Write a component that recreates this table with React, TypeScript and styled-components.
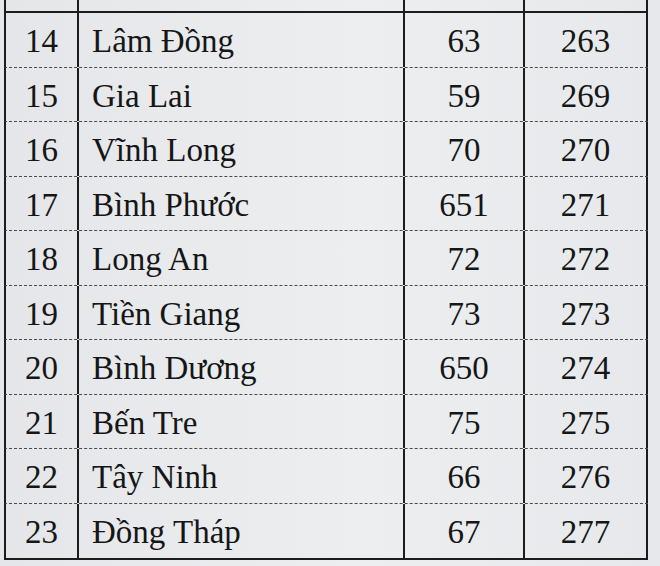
import React from 'react';
import styled, { createGlobalStyle } from 'styled-components';

interface Province {
  stt: number;
  name: string;
  code: number;
  license: number;
}

const PROVINCES: Province[] = [
  { stt: 14, name: 'Lâm Đồng', code: 63, license: 263 },
  { stt: 15, name: 'Gia Lai', code: 59, license: 269 },
  { stt: 16, name: 'Vĩnh Long', code: 70, license: 270 },
  { stt: 17, name: 'Bình Phước', code: 651, license: 271 },
  { stt: 18, name: 'Long An', code: 72, license: 272 },
  { stt: 19, name: 'Tiền Giang', code: 73, license: 273 },
  { stt: 20, name: 'Bình Dương', code: 650, license: 274 },
  { stt: 21, name: 'Bến Tre', code: 75, license: 275 },
  { stt: 22, name: 'Tây Ninh', code: 66, license: 276 },
  { stt: 23, name: 'Đồng Tháp', code: 67, license: 277 },
];

const GlobalStyle = createGlobalStyle`
  html, body {
    margin: 0;
    padding: 0;
    background: #e7e9ec;
  }
`;

const Page = styled.div`
  width: 660px;
  height: 566px;
  overflow: hidden;
  background: linear-gradient(90deg, #e4e6e9 0%, #eceef0 55%, #e6e8eb 100%);
  padding-left: 4px;
  box-sizing: border-box;
  font-family: 'Liberation Serif', 'Times New Roman', serif;
  color: #161616;
`;

const Table = styled.div`
  width: 644px;
  display: flex;
  flex-direction: column;
  border-bottom: 2px solid #1c1c1c;
`;

const Row = styled.div<{ $head?: boolean }>`
  display: grid;
  grid-template-columns: 73px 326px 120px 123px;
  border-left: 2px solid #1c1c1c;
  height: ${({ $head }) => ($head ? '13px' : '54.5px')};
  box-sizing: border-box;
  border-bottom: ${({ $head }) => ($head ? '2px solid #1c1c1c' : '1px dashed #4a4a4a')};

  &:last-child {
    border-bottom: none;
  }
`;

const Cell = styled.div<{ $align?: 'left' | 'center' }>`
  border-right: 2px solid #1c1c1c;
  display: flex;
  align-items: center;
  justify-content: ${({ $align }) => ($align === 'left' ? 'flex-start' : 'center')};
  padding: 4px 0 0 ${({ $align }) => ($align === 'left' ? '13px' : '0')};
  box-sizing: border-box;
  font-size: 33px;
  line-height: 1;
  white-space: nowrap;
`;

const App: React.FC = () => (
  <Page>
    <GlobalStyle />
    <Table>
      <Row $head>
        <Cell />
        <Cell />
        <Cell />
        <Cell />
      </Row>
      {PROVINCES.map(p => (
        <Row key={p.stt}>
          <Cell>{p.stt}</Cell>
          <Cell $align="left">{p.name}</Cell>
          <Cell>{p.code}</Cell>
          <Cell>{p.license}</Cell>
        </Row>
      ))}
    </Table>
  </Page>
);

export default App;
